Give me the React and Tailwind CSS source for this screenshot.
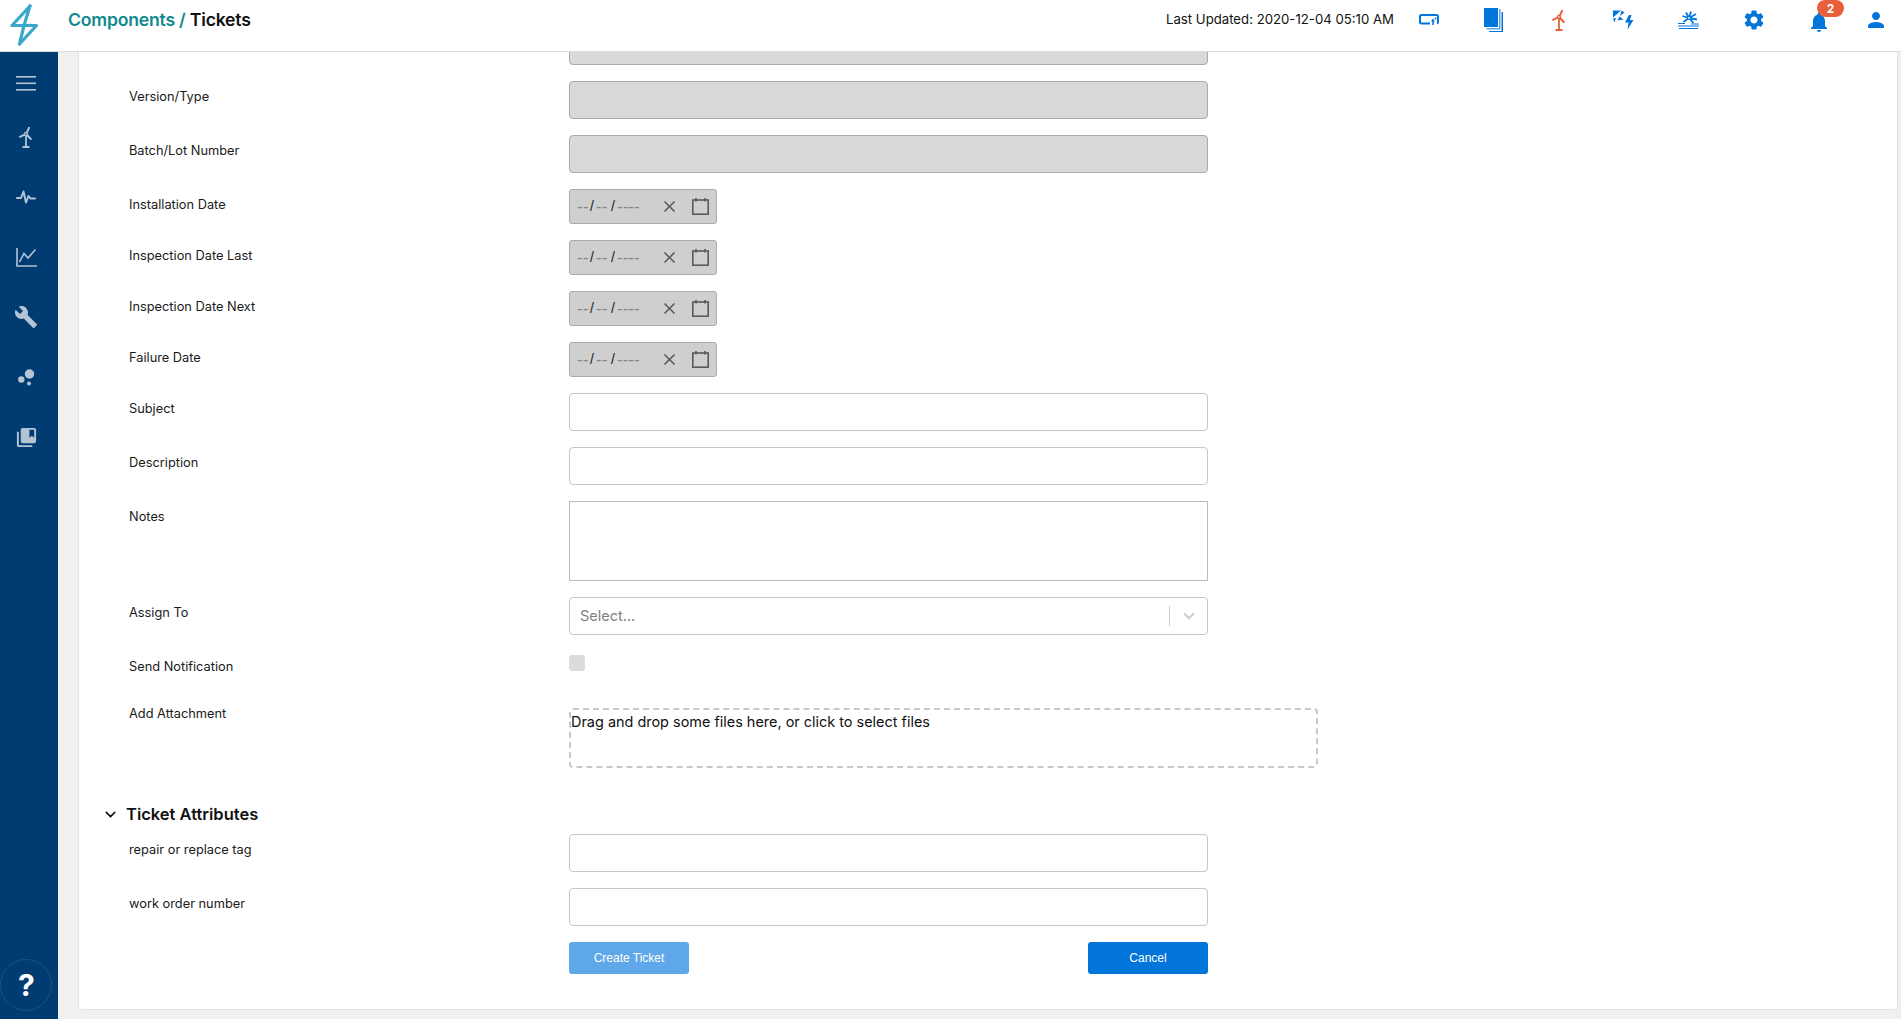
import React from "react";
import { MdBuild, MdCollectionsBookmark, MdSettings, MdNotifications, MdPerson, MdClose } from "react-icons/md";
import { ChevronDown } from "lucide-react";

const font = { fontFamily: "Inter, 'Noto Sans', sans-serif" };

// logo, lightning bolt made of one line
function Logo() {
  return (
    <svg width="30" height="44" viewBox="0 0 30 44" fill="none" stroke="#3aa8c8" strokeWidth="3.2" strokeLinecap="round" strokeLinejoin="round">
      <path d="M20 2 L2 21.5 H26.5 L9.5 40" />
      <path d="M20 2 L14 21.5 L9.5 40" />
    </svg>
  );
}

function Turbine() {
  return (
    <svg width="14" height="21" viewBox="0 0 14 21" fill="none" stroke="currentColor">
      <circle cx="7" cy="7" r="1.6" strokeWidth="1.3" />
      <path d="M7.8 5.6 L10 0.8" strokeWidth="2" strokeLinecap="round" />
      <path d="M5.5 7.6 L1 9.8" strokeWidth="2" strokeLinecap="round" />
      <path d="M8.2 8.2 L11.8 12" strokeWidth="2" strokeLinecap="round" />
      <path d="M7 9 V19" strokeWidth="1.8" />
      <path d="M3.5 20 H10.5" strokeWidth="2" />
    </svg>
  );
}

function Pulse() {
  return (
    <svg width="20" height="14" viewBox="0 0 20 14" fill="none" stroke="currentColor" strokeWidth="2" strokeLinejoin="round" strokeLinecap="round">
      <path d="M1 8 H5 L7.5 1.5 L10 12.5 L12.5 6 L14.5 8.5 H19" />
    </svg>
  );
}

function Chart() {
  return (
    <svg width="21" height="19" viewBox="0 0 21 19" fill="none" stroke="currentColor" strokeWidth="1.6">
      <path d="M1 0 V18 H21" />
      <path d="M3.5 14 L8 5.5 L12 10 L19.5 1.5" />
    </svg>
  );
}

function Bubbles() {
  return (
    <svg width="17" height="17" viewBox="0 0 17 17" fill="currentColor">
      <circle cx="11.5" cy="5" r="4.7" />
      <circle cx="3.3" cy="10.5" r="3.2" />
      <circle cx="11" cy="14.5" r="2" />
    </svg>
  );
}

function Hamburger() {
  return (
    <svg width="20" height="15" viewBox="0 0 20 15" fill="currentColor">
      <rect y="0" width="20" height="1.6" />
      <rect y="6.5" width="20" height="1.6" />
      <rect y="13" width="20" height="1.6" />
    </svg>
  );
}

function Battery() {
  return (
    <svg width="20" height="12" viewBox="0 0 20 12" fill="none" stroke="currentColor">
      <path d="M11 9.5 H2.5 Q1 9.5 1 8 V2.5 Q1 1 2.5 1 H17.5 Q19 1 19 2.5 V8 Q19 9 18 9.5" strokeWidth="2" />
      <path d="M12.5 7 H15.5 M14 5 V11" strokeWidth="1.6" />
      <circle cx="16.5" cy="4.5" r="1" fill="currentColor" stroke="none" />
    </svg>
  );
}

function Docs() {
  return (
    <svg width="19" height="24" viewBox="0 0 19 24" fill="none">
      <rect x="0" y="0" width="14" height="19" fill="#0275db" />
      <path d="M15 1 V20 H2.5 V21.5 H16.5 V1 Z" fill="#5ba6e8" />
      <path d="M17.5 4 V23 H5 V24 H19 V4 Z" fill="#0275db" />
    </svg>
  );
}

function SolarBolt() {
  return (
    <svg width="21" height="20" viewBox="0 0 21 20" fill="currentColor">
      <path d="M0 0.5 H8 L0 7.5 Z" />
      <path d="M8.5 0.5 L11.5 2.5 L7 6 Z" />
      <path d="M0 8.5 L3 8 L1.5 12.5 Z" />
      <path d="M6.5 6.5 L10.5 9.5 L4.5 10.5 Z" />
      <path d="M16 5 L12 12.5 H15.5 L14.5 19.5 L20.5 10 H17 L18.5 5 Z" />
    </svg>
  );
}

function SunWater() {
  return (
    <svg width="21" height="18" viewBox="0 0 21 18" fill="none" stroke="currentColor">
      <path d="M11 7 L13 0.5 M11 7 L18 3 M11 7 L19 8.5 M11 7 L15.5 12 M11 7 L8 1.5 M11 7 L4.5 5 M11 7 L5.5 11" strokeWidth="1.8" />
      <circle cx="11" cy="7" r="1.5" fill="#fff" strokeWidth="1" />
      <path d="M0 12.5 H7 M13 13 H21" strokeWidth="1.1" />
      <path d="M0 15 H21 M1 17.5 H20" strokeWidth="1.1" />
    </svg>
  );
}

function Calendar() {
  return (
    <svg width="17" height="17" viewBox="0 0 17 17" fill="none" stroke="#595959" strokeWidth="1.6">
      <rect x="0.8" y="2" width="15.4" height="14.2" />
      <path d="M4 0 V3.5 M13 0 V3.5" />
    </svg>
  );
}

function Field({ label, children, labelClass = "pt-[6px]" }) {
  return (
    <div className="flex mb-4">
      <label className={"w-[440px] shrink-0 text-[12.8px] leading-5 text-[#1a1a1a] " + labelClass}>{label}</label>
      {children}
    </div>
  );
}

function TextInput({ disabled }) {
  return (
    <input
      disabled={disabled}
      className={
        "w-[639px] h-[38px] rounded border " +
        (disabled ? "bg-[#d9d9d9] border-[#ababab]" : "bg-white border-[#c6c6c6]")
      }
    />
  );
}

function DateInput() {
  return (
    <div className="w-[148px] h-[35px] rounded-[3px] border border-[#ababab] bg-[#cfcfcf] flex items-center pl-[7px] text-[13px]" style={{ fontFamily: "'Liberation Sans', sans-serif" }}>
      <span className="text-[#858585] text-[17px] w-[13px]">--</span>
      <span className="text-[#222] w-[6px] text-[14px]">/</span>
      <span className="text-[#858585] text-[17px] w-[15px]">--</span>
      <span className="text-[#222] w-[6px] text-[14px]">/</span>
      <span className="text-[#858585] text-[17px] w-[25px]">----</span>
      <MdClose className="ml-[18px] text-[#595959]" size={19} />
      <span className="ml-[13px] flex">
        <Calendar />
      </span>
    </div>
  );
}

export default function App() {
  const sideIcons = [
    <Turbine key="t" />,
    <Pulse key="p" />,
    <Chart key="c" />,
    <MdBuild key="b" size={24} />,
    <Bubbles key="d" />,
    <MdCollectionsBookmark key="l" size={23} />,
  ];

  const topIcons = [
    <Battery key="a" />,
    <Docs key="b" />,
    <span key="c" className="text-[#e85f3a] flex"><Turbine /></span>,
    <SolarBolt key="d" />,
    <SunWater key="e" />,
    <MdSettings key="f" size={24} />,
  ];

  return (
    <div className="h-screen flex flex-col overflow-hidden bg-[#f0f0f0]" style={font}>
      {/* top bar */}
      <div className="h-[52px] shrink-0 bg-white border-b border-[#dcdcdc] flex items-center relative z-10">
        <div className="w-[68px] pl-[10px] flex">
          <Logo />
        </div>
        <div className="text-[17.6px] font-semibold tracking-[-0.2px] text-[#11898d] mb-[11px]">
          Components / <span className="text-[#111]">Tickets</span>
        </div>
        <div className="ml-auto text-[13.2px] text-[#111] mb-[11px]">Last Updated: 2020-12-04 05:10 AM</div>
        <div className="flex items-center text-[#0275db] h-[40px] ml-[2px] mb-[11px]">
          {topIcons.map((icon) => (
            <div key={icon.key} className="w-[65px] flex justify-center">{icon}</div>
          ))}
          <div className="w-[65px] flex justify-center relative mt-[3px]">
            <MdNotifications size={24} />
            <span className="absolute left-[31px] -top-[10px] w-[27px] h-[17px] rounded-b-[10px] rounded-t-[9px] bg-[#e85f3a] text-white text-[12px] font-bold leading-[17px] text-center">2</span>
          </div>
          <div className="w-[50px] flex justify-center">
            <MdPerson size={24} />
          </div>
        </div>
      </div>

      <div className="flex-1 flex min-h-0">
        {/* side bar */}
        <div className="w-[58px] shrink-0 bg-[#003b71] text-[#b3c4d5] flex flex-col items-center pt-[7px] pr-[6px]">
          <div className="h-[48px] flex items-center">
            <Hamburger />
          </div>
          {sideIcons.map((icon) => (
            <div key={icon.key} className="h-[60px] flex items-center">{icon}</div>
          ))}
          <div className="mt-auto mb-[8px] w-[52px] h-[52px] shrink-0 rounded-full border border-[#1f4f82] text-white flex items-center justify-center text-[30px] font-bold pl-[1px]">
            ?
          </div>
        </div>

        {/* form card */}
        <div className="flex-1 min-w-0 pl-5 pr-[3px] overflow-hidden">
          <div className="-mt-[26px] h-[984px] bg-white border border-[#e2e2e2] rounded pl-[50px]">
            <Field label="">
              <TextInput disabled />
            </Field>
            <Field label="Version/Type">
              <TextInput disabled />
            </Field>
            <Field label="Batch/Lot Number">
              <TextInput disabled />
            </Field>
            <Field label="Installation Date">
              <DateInput />
            </Field>
            <Field label="Inspection Date Last">
              <DateInput />
            </Field>
            <Field label="Inspection Date Next">
              <DateInput />
            </Field>
            <Field label="Failure Date">
              <DateInput />
            </Field>
            <Field label="Subject">
              <TextInput />
            </Field>
            <Field label="Description">
              <TextInput />
            </Field>
            <Field label="Notes">
              <textarea className="w-[639px] h-20 resize-none rounded-none border border-[#bcbcbc] bg-white" />
            </Field>
            <Field label="Assign To">
              <div className="w-[639px] h-[38px] rounded border border-[#c6c6c6] bg-white flex items-center pl-[10px] text-[14.5px] text-[#808080]">
                Select...
                <span className="ml-auto w-px h-5 bg-[#cccccc]" />
                <ChevronDown className="ml-[10px] mr-[9px] text-[#cccccc]" size={18} strokeWidth={2.4} />
              </div>
            </Field>
            <div className="flex mb-4 h-[41px]">
              <label className="w-[440px] shrink-0 text-[12.8px] leading-5 text-[#1a1a1a] pt-[6px]">Send Notification</label>
              <span className="mt-1 w-4 h-4 rounded-[3px] bg-[#dcdcdc]" />
            </div>
            <div className="flex h-[60px]">
              <label className="w-[440px] shrink-0 text-[12.8px] leading-5 text-[#1a1a1a] -mt-1">Add Attachment</label>
              <div className="w-[749px] h-[60px] rounded border-2 border-dashed border-[#c8c8c8] text-[14.45px] leading-5 text-[#111] pt-[2px]">
                Drag and drop some files here, or click to select files
              </div>
            </div>

            <div className="-ml-[27px] mt-[35px] h-[22px] flex items-center gap-[7px] mb-[9px]">
              <ChevronDown size={17} strokeWidth={2.2} className="text-[#111]" />
              <span className="text-[16.5px] font-semibold text-[#111]">Ticket Attributes</span>
            </div>
            <Field label="repair or replace tag">
              <TextInput />
            </Field>
            <Field label="work order number">
              <TextInput />
            </Field>
            <div className="ml-[440px] w-[639px] flex justify-between text-[12px] text-white" style={{ fontFamily: "'Liberation Sans', sans-serif" }}>
              <button className="w-[120px] h-8 rounded-[3px] bg-[#5ea7e8]">Create Ticket</button>
              <button className="w-[120px] h-8 rounded-[3px] bg-[#0275db]">Cancel</button>
            </div>
          </div>
        </div>
      </div>
    </div>
  );
}
